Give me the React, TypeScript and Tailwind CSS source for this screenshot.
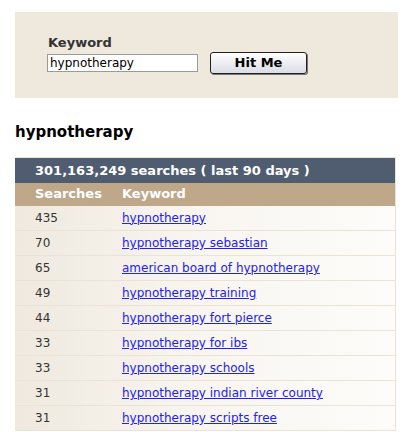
const rows: { searches: number; keyword: string }[] = [
  { searches: 435, keyword: "hypnotherapy" },
  { searches: 70, keyword: "hypnotherapy sebastian" },
  { searches: 65, keyword: "american board of hypnotherapy" },
  { searches: 49, keyword: "hypnotherapy training" },
  { searches: 44, keyword: "hypnotherapy fort pierce" },
  { searches: 33, keyword: "hypnotherapy for ibs" },
  { searches: 33, keyword: "hypnotherapy schools" },
  { searches: 31, keyword: "hypnotherapy indian river county" },
  { searches: 31, keyword: "hypnotherapy scripts free" },
];

const App = () => {
  return (
    <div className="w-[404px] h-[432px] overflow-hidden bg-white pt-3 font-['DejaVu_Sans',Verdana,sans-serif] text-[#222]">
      {/* Search panel */}
      <div className="ml-[15px] w-[383px] h-[86px] bg-[#efe8dd] pl-[32px] pt-[23px]">
        <div className="text-[13px] font-bold text-[#333] leading-[16px] pl-[1px]">Keyword</div>
        <div className="flex items-center mt-[1px]">
          <input
            type="text"
            defaultValue="hypnotherapy"
            className="w-[151px] h-[18px] border border-[#9a9a9a] bg-white px-[2px] text-[12px] text-black outline-none font-['DejaVu_Sans',Verdana,sans-serif]"
          />
          <button className="ml-[12px] w-[97px] h-[22px] rounded-[3px] border border-[#222] bg-gradient-to-b from-white to-[#dcdce6] text-[13px] font-bold text-black shadow-[1px_1px_0_#777] font-['DejaVu_Sans',Verdana,sans-serif]">
            Hit Me
          </button>
        </div>
      </div>

      <h1 className="ml-[15px] mt-[24px] text-[15px] font-bold text-black leading-[20px]">hypnotherapy</h1>

      {/* Results table */}
      <table className="ml-[15px] mt-[15px] w-[381px] table-fixed border-collapse border-t border-r border-[#ebe2d4] text-[12px]">
        <colgroup>
          <col className="w-[107px]" />
          <col />
        </colgroup>
        <thead>
          <tr className="bg-[#505d70] h-[25px]">
            <th colSpan={2} className="pl-[20px] text-left text-[13px] font-bold text-white">
              301,163,249 searches ( last 90 days )
            </th>
          </tr>
          <tr className="bg-[#bfa889] h-[23px]">
            <th className="pl-[20px] text-left text-[13px] font-bold text-white">Searches</th>
            <th className="text-left text-[13px] font-bold text-white">Keyword</th>
          </tr>
        </thead>
        <tbody>
          {rows.map((row, index) => (
            <tr
              key={index}
              className="h-[25px] border-b border-[#ebe3d6] bg-gradient-to-r from-[#efe9df] via-[#f9f6f1] to-[#fdfcfa]"
            >
              <td className="pl-[20px] text-[#333]">{row.searches}</td>
              <td>
                <a href="#" className="text-[#2222ee] underline">
                  {row.keyword}
                </a>
              </td>
            </tr>
          ))}
        </tbody>
      </table>
    </div>
  );
};

export default App;
